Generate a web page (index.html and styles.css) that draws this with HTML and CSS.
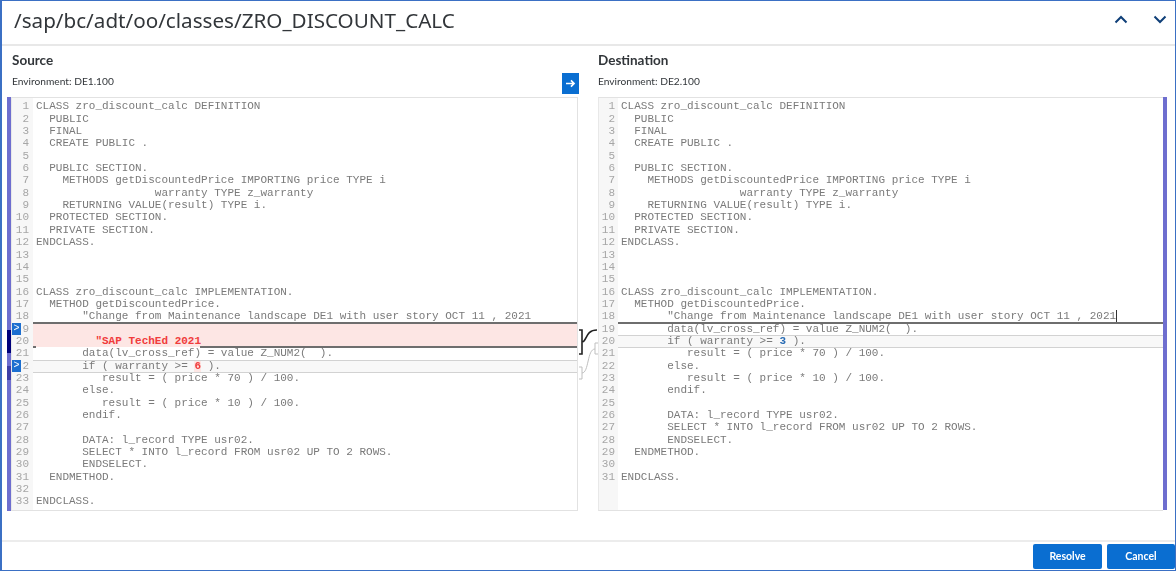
FILE: index.html
```html
<!DOCTYPE html>
<html lang="en">
<head>
<meta charset="utf-8">
<title>Merge conflict</title>
<link rel="stylesheet" href="styles.css">
</head>
<body>
<div class="dialog">
  <header class="head">
    <h1 class="title">/sap/bc/adt/oo/classes/ZRO_DISCOUNT_CALC</h1>
    <div class="nav">
      <svg class="chev" viewBox="0 0 14 9"><path d="M1.500 7.500 7 2l5.500 5.500"/></svg>
      <svg class="chev" viewBox="0 0 14 9"><path d="M1.500 1.500 7 7l5.500-5.500"/></svg>
    </div>
  </header>
  <main class="panes">
    <section class="pane pane-src">
      <div class="pane-head">
        <div>
          <h2 class="pane-title">Source</h2>
          <div class="env">Environment: DE1.100</div>
        </div>
        <button class="copy" aria-label="Copy to destination"><svg viewBox="0 0 12 10"><path d="M1 5h9M6.500 1.500 10 5 6.500 8.500"/></svg></button>
      </div>
      <div class="editor">
        <div class="bar"><i class="seg seg-a"></i><i class="seg seg-b"></i></div>
        <div class="code">
<div class="row"><b>1</b><pre>CLASS zro_discount_calc DEFINITION</pre></div>
<div class="row"><b>2</b><pre>  PUBLIC</pre></div>
<div class="row"><b>3</b><pre>  FINAL</pre></div>
<div class="row"><b>4</b><pre>  CREATE PUBLIC .</pre></div>
<div class="row"><b>5</b><pre></pre></div>
<div class="row"><b>6</b><pre>  PUBLIC SECTION.</pre></div>
<div class="row"><b>7</b><pre>    METHODS getDiscountedPrice IMPORTING price TYPE i</pre></div>
<div class="row"><b>8</b><pre>                  warranty TYPE z_warranty</pre></div>
<div class="row"><b>9</b><pre>    RETURNING VALUE(result) TYPE i.</pre></div>
<div class="row"><b>10</b><pre>  PROTECTED SECTION.</pre></div>
<div class="row"><b>11</b><pre>  PRIVATE SECTION.</pre></div>
<div class="row"><b>12</b><pre>ENDCLASS.</pre></div>
<div class="row"><b>13</b><pre></pre></div>
<div class="row"><b>14</b><pre></pre></div>
<div class="row"><b>15</b><pre></pre></div>
<div class="row"><b>16</b><pre>CLASS zro_discount_calc IMPLEMENTATION.</pre></div>
<div class="row"><b>17</b><pre>  METHOD getDiscountedPrice.</pre></div>
<div class="row rule-dark"><b>18</b><pre>       "Change from Maintenance landscape DE1 with user story OCT 11 , 2021</pre></div>
<div class="row pink"><b>9</b><span class="mark">&gt;</span><pre></pre></div>
<div class="row pink pink-end"><b>20</b><pre>         <span class="add">"SAP TechEd 2021</span></pre></div>
<div class="row rule-light"><b>21</b><pre>       data(lv_cross_ref) = value Z_NUM2(  ).</pre></div>
<div class="row changed"><b>2</b><span class="mark">&gt;</span><pre>       if ( warranty &gt;= <span class="num">6</span> ).</pre></div>
<div class="row"><b>23</b><pre>          result = ( price * 70 ) / 100.</pre></div>
<div class="row"><b>24</b><pre>       else.</pre></div>
<div class="row"><b>25</b><pre>          result = ( price * 10 ) / 100.</pre></div>
<div class="row"><b>26</b><pre>       endif.</pre></div>
<div class="row"><b>27</b><pre></pre></div>
<div class="row"><b>28</b><pre>       DATA: l_record TYPE usr02.</pre></div>
<div class="row"><b>29</b><pre>       SELECT * INTO l_record FROM usr02 UP TO 2 ROWS.</pre></div>
<div class="row"><b>30</b><pre>       ENDSELECT.</pre></div>
<div class="row"><b>31</b><pre>  ENDMETHOD.</pre></div>
<div class="row"><b>32</b><pre></pre></div>
<div class="row"><b>33</b><pre>ENDCLASS.</pre></div>
        </div>
      </div>
    </section>
    <svg class="links" viewBox="0 0 20 420">
      <path class="link-dark" d="M1 233h3v24H1M4 245C9 245 7 233 19 233"/>
      <path class="link-light" d="M20 246h-3v11h3M1 270h3v12H1M4 276C11 276 9 252 17 252"/>
    </svg>
    <section class="pane pane-dst">
      <div class="pane-head">
        <div>
          <h2 class="pane-title">Destination</h2>
          <div class="env">Environment: DE2.100</div>
        </div>
      </div>
      <div class="editor editor-dst">
        <div class="code">
<div class="row"><b>1</b><pre>CLASS zro_discount_calc DEFINITION</pre></div>
<div class="row"><b>2</b><pre>  PUBLIC</pre></div>
<div class="row"><b>3</b><pre>  FINAL</pre></div>
<div class="row"><b>4</b><pre>  CREATE PUBLIC .</pre></div>
<div class="row"><b>5</b><pre></pre></div>
<div class="row"><b>6</b><pre>  PUBLIC SECTION.</pre></div>
<div class="row"><b>7</b><pre>    METHODS getDiscountedPrice IMPORTING price TYPE i</pre></div>
<div class="row"><b>8</b><pre>                  warranty TYPE z_warranty</pre></div>
<div class="row"><b>9</b><pre>    RETURNING VALUE(result) TYPE i.</pre></div>
<div class="row"><b>10</b><pre>  PROTECTED SECTION.</pre></div>
<div class="row"><b>11</b><pre>  PRIVATE SECTION.</pre></div>
<div class="row"><b>12</b><pre>ENDCLASS.</pre></div>
<div class="row"><b>13</b><pre></pre></div>
<div class="row"><b>14</b><pre></pre></div>
<div class="row"><b>15</b><pre></pre></div>
<div class="row"><b>16</b><pre>CLASS zro_discount_calc IMPLEMENTATION.</pre></div>
<div class="row"><b>17</b><pre>  METHOD getDiscountedPrice.</pre></div>
<div class="row rule-dark"><b>18</b><pre>       "Change from Maintenance landscape DE1 with user story OCT 11 , 2021<span class="caret"></span></pre></div>
<div class="row rule-light"><b>19</b><pre>       data(lv_cross_ref) = value Z_NUM2(  ).</pre></div>
<div class="row changed"><b>20</b><pre>       if ( warranty &gt;= <span class="num-dst">3</span> ).</pre></div>
<div class="row"><b>21</b><pre>          result = ( price * 70 ) / 100.</pre></div>
<div class="row"><b>22</b><pre>       else.</pre></div>
<div class="row"><b>23</b><pre>          result = ( price * 10 ) / 100.</pre></div>
<div class="row"><b>24</b><pre>       endif.</pre></div>
<div class="row"><b>25</b><pre></pre></div>
<div class="row"><b>26</b><pre>       DATA: l_record TYPE usr02.</pre></div>
<div class="row"><b>27</b><pre>       SELECT * INTO l_record FROM usr02 UP TO 2 ROWS.</pre></div>
<div class="row"><b>28</b><pre>       ENDSELECT.</pre></div>
<div class="row"><b>29</b><pre>  ENDMETHOD.</pre></div>
<div class="row"><b>30</b><pre></pre></div>
<div class="row"><b>31</b><pre>ENDCLASS.</pre></div>
        </div>
        <div class="bar bar-right"></div>
      </div>
    </section>
  </main>
  <footer class="foot">
    <button class="btn">Resolve</button>
    <button class="btn btn-last">Cancel</button>
  </footer>
</div>
</body>
</html>
```
FILE: styles.css
```css
* { box-sizing: border-box; }
html, body { margin: 0; height: 100%; background: #fff; overflow: hidden; }
.dialog {
  width: 1176px; height: 571px;
  display: flex; flex-direction: column;
  border: 1px solid #3b70c4; border-left-width: 2px;
  color: #32363a;
  font-family: "Lato", "Noto Sans", sans-serif;
  filter: blur(0.4px);
}
.head {
  flex: none; height: 45px;
  display: flex; align-items: center; justify-content: space-between;
  padding: 0 8px 6px 12px;
  border-bottom: 2px solid #e8e8e8;
}
.title { margin: 0; font: 400 20.650px/26px "Noto Sans", sans-serif; color: #32363a; }
.nav { display: flex; gap: 25px; }
.chev { width: 14px; height: 9px; fill: none; stroke: #0f3f78; stroke-width: 2; }
.panes { flex: 1; display: flex; padding-left: 5px; }
.pane { display: flex; flex-direction: column; }
.pane-src { width: 571px; }
.pane-dst { width: 569px; }
.pane-head {
  height: 51px; padding: 0 0 0 5px;
  display: flex; justify-content: space-between; align-items: flex-end;
}
.pane-dst .pane-head { padding-left: 0; }
.pane-title { margin: 0; font: 700 13.500px/18px "Lato", sans-serif; color: #32363a; }
.pane-head > div { padding-bottom: 9px; }
.env { margin-top: 5px; font: 400 10.200px/14px "Lato", sans-serif; color: #32363a; }
.copy {
  width: 17px; height: 21px; padding: 0; margin: 0 -1px 3px 0;
  display: flex; align-items: center; justify-content: center;
  background: #0a6ed1; border: 0;
}
.copy svg { width: 11px; height: 9px; fill: none; stroke: #fff; stroke-width: 1.800; }
.editor { position: relative; display: flex; height: 414px; }
.bar { position: relative; flex: none; width: 4px; background: #6e6ecf; }
.bar-right { height: 413px; }
.seg { position: absolute; left: 0; width: 100%; display: block; }
.seg-a { top: 233px; height: 23px; background: #00007a; }
.seg-b { top: 269px; height: 14px; background: #3f3fa6; }
.code {
  position: relative; flex: 1; min-width: 0;
  border: 1px solid #e2e2e2; border-left-color: #e8e8e8;
  padding-top: 2.400px;
  background: linear-gradient(#f7f7f7, #f7f7f7) left / 21px 100% no-repeat #fff;
  font: 11px/12.350px "Liberation Mono", monospace;
  color: #7a7a7a;
}
.editor-dst .code { border-right: 0; background-size: 19px 100%; }
.row { position: relative; display: flex; height: 12.350px; }
.row b {
  flex: none; width: 18px; padding-right: 1px; text-align: right;
  font-weight: 400; color: #a6a6a6;
}
.editor-dst .row b { width: 17px; }
.row pre { position: relative; margin: 0 0 0 3px; padding-left: 3px; flex: 1; font: inherit; white-space: pre; }
.editor-dst .row pre { margin-left: 2px; }
.pink > pre { background: #fde6e4; }
.changed > pre { background: #f8f8f8; box-shadow: 0 1px 0 #d2d2d2; z-index: 1; }
.rule-dark > pre { box-shadow: 0 1px 0 #6e6e6e, 0 0 0 transparent; border-bottom: 1px solid #6e6e6e; z-index: 2; }
.rule-light > pre { box-shadow: 0 1px 0 #d2d2d2; z-index: 2; }
.pink-end { z-index: 1; }
.pink-end > pre::after {
  content: ""; position: absolute; left: 167px; right: 0; bottom: -1px; height: 2px; background: #6e6e6e;
}
.pink-end > pre::before {
  content: ""; position: absolute; left: 0; width: 3px; bottom: -1px; height: 2px; background: #6e6e6e;
}
.add { color: #f03c3c; font-weight: 700; }
.num { color: #f03c3c; font-weight: 700; background: #fde6e4; }
.num-dst { color: #2a6db5; font-weight: 700; }
.caret { display: inline-block; width: 1px; height: 12px; background: #333; vertical-align: top; }
.mark {
  position: absolute; left: 0; top: 0; width: 9px; height: 12px;
  background: #1c6fd0; color: #fff; font-size: 10px; line-height: 11px; text-align: center;
}
.links { flex: none; width: 20px; height: 420px; margin-top: 51px; margin-bottom: -6px; fill: none; }
.link-dark { stroke: #222; stroke-width: 1.600; }
.link-light { stroke: #bfbfbf; stroke-width: 1; }
.foot {
  flex: none; height: 30px;
  display: flex; justify-content: flex-end; align-items: center; gap: 5px;
  border-top: 2px solid #ececec;
}
.btn {
  width: 69px; height: 25px; padding: 0;
  background: #0a6ed1; color: #fff; border: 0; border-radius: 2px;
  font: 700 10.500px/25px "Lato", sans-serif;
}
.btn-last { width: 68px; }
```
